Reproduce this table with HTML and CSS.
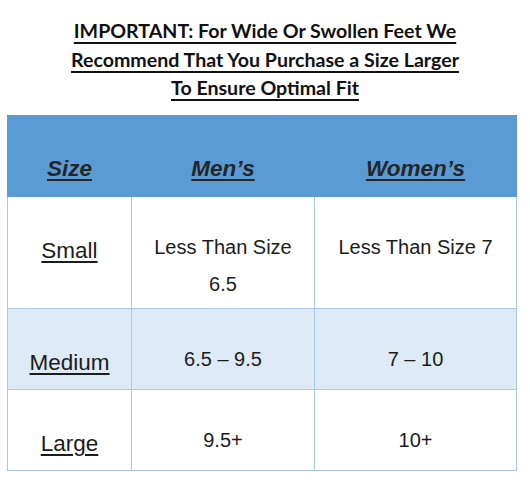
FILE: index.html
```html
<!DOCTYPE html>
<html>
<head>
    <title>Size Chart</title>
    <link rel="stylesheet" href="styles.css">
</head>
<body>
    <div class="notice">
        <p>IMPORTANT: For Wide Or Swollen Feet We</p>
        <p>Recommend That You Purchase a Size Larger</p>
        <p>To Ensure Optimal Fit</p>
    </div>
    <table class="size-chart">
        <tr class="head-row">
            <th class="col-size">Size</th>
            <th class="col-men">Men’s</th>
            <th class="col-women">Women’s</th>
        </tr>
        <tr class="row-small">
            <td class="size-name"><span>Small</span></td>
            <td>Less Than Size<br>6.5</td>
            <td>Less Than Size 7</td>
        </tr>
        <tr class="row-medium shaded">
            <td class="size-name"><span>Medium</span></td>
            <td>6.5 – 9.5</td>
            <td>7 – 10</td>
        </tr>
        <tr class="row-large">
            <td class="size-name"><span>Large</span></td>
            <td>9.5+</td>
            <td>10+</td>
        </tr>
    </table>
</body>
</html>
```

FILE: styles.css
```css
body {
    margin: 0;
    background-color: #ffffff;
    font-family: "Liberation Sans", Arial, sans-serif;
    color: #1c1c1c;
}
.notice {
    padding-top: 17px;
    text-align: center;
    font-family: Lato, "Open Sans", sans-serif;
    font-weight: bold;
    font-size: 19.6px;
    line-height: 28.5px;
    color: #111111;
}
.notice p {
    margin: 0;
    text-decoration: underline;
    text-decoration-thickness: 2px;
    text-underline-offset: 4px;
}
.size-chart {
    margin: 12px 0 0 7px;
    width: 510px;
    border-collapse: collapse;
    table-layout: fixed;
}
.size-chart th,
.size-chart td {
    border: 1px solid #a9c8e6;
    padding: 0;
    text-align: center;
    vertical-align: top;
}
.col-size {
    width: 123px;
}
.col-men {
    width: 182px;
}
.head-row {
    height: 81px;
    background-color: #5b9bd5;
}
.head-row th {
    border-color: #5b9bd5;
    padding-top: 38px;
    font-size: 22.5px;
    line-height: 30px;
    font-style: italic;
    font-weight: bold;
    color: #262626;
    text-decoration: underline;
    text-decoration-thickness: 2px;
    text-underline-offset: 3px;
}
.size-chart td {
    padding-top: 32px;
    font-size: 20px;
    line-height: 37px;
}
.size-chart td.size-name {
    padding-top: 35px;
    font-size: 22.5px;
}
.size-name span {
    text-decoration: underline;
    text-decoration-thickness: 1.5px;
    text-underline-offset: 3px;
}
.row-small {
    height: 112px;
}
.row-medium,
.row-large {
    height: 81px;
}
.shaded {
    background-color: #deeaf6;
}
```
